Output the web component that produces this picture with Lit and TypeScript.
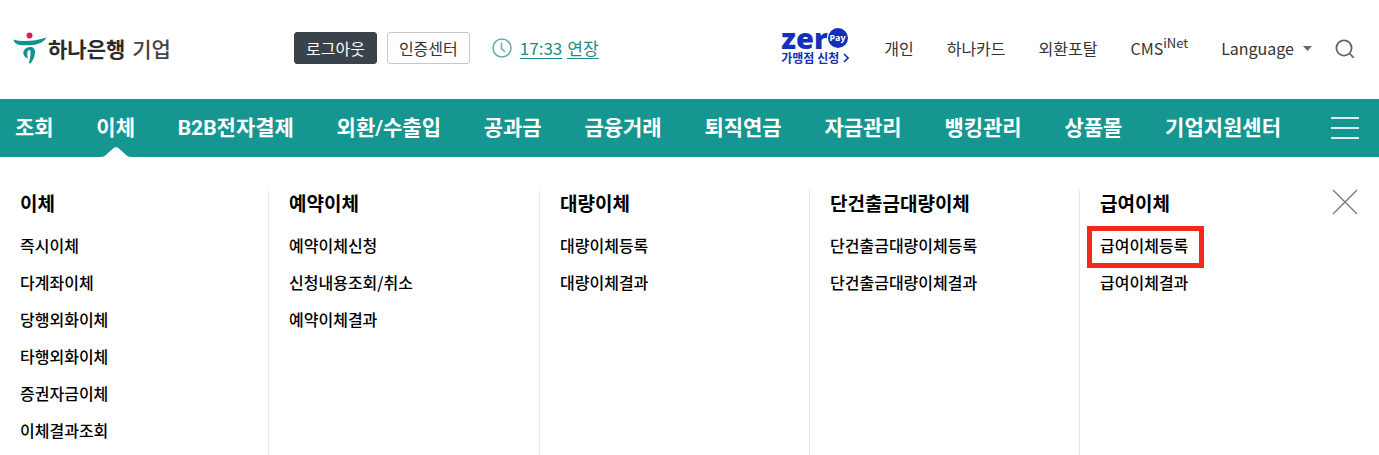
import { LitElement, html, css } from "lit";
import { customElement, state } from "lit/decorators.js";
import { classMap } from "lit/directives/class-map.js";

const MENUS = ["조회", "이체", "B2B전자결제", "외환/수출입", "공과금", "금융거래", "퇴직연금", "자금관리", "뱅킹관리", "상품몰", "기업지원센터"];

const GROUPS = [
  { title: "이체", items: ["즉시이체", "다계좌이체", "당행외화이체", "타행외화이체", "증권자금이체", "이체결과조회"] },
  { title: "예약이체", items: ["예약이체신청", "신청내용조회/취소", "예약이체결과"] },
  { title: "대량이체", items: ["대량이체등록", "대량이체결과"] },
  { title: "단건출금대량이체", items: ["단건출금대량이체등록", "단건출금대량이체결과"] },
  { title: "급여이체", items: ["급여이체등록", "급여이체결과"] },
];

const base = css`
  * { box-sizing: border-box; }
  a { color: inherit; text-decoration: none; white-space: nowrap; }
  button { font: inherit; margin: 0; padding: 0; border: 0; background: none; color: inherit; cursor: pointer; white-space: nowrap; }
  svg { display: block; flex: none; }
`;

@customElement("bank-header")
export class BankHeader extends LitElement {
  static styles = [base, css`
    :host { display: block; }
    .bar { display: flex; align-items: center; height: 99px; padding: 0 24px 3px 13px; font-size: 16px; line-height: 24px; color: #333; }
    .logo { display: flex; align-items: center; width: 281px; color: #2b2b2b; font-size: 21px; line-height: 30px; }
    .logo b { font-weight: 700; margin-left: 1px; }
    .logo span { font-weight: 500; margin-left: 7px; color: #444; }
    .session { display: flex; align-items: center; }
    .btn { height: 32px; padding: 0 11px; border: 1px solid #c8c8c8; border-radius: 3px; background: #fff; line-height: 28px; }
    .dark { background: #3a424a; border-color: #3a424a; color: #fff; margin-right: 10px; }
    .clock { margin: 0 8px 0 22px; }
    .timer { display: flex; gap: 5px; color: #1d8a85; font-size: 17px; text-decoration: underline; text-underline-offset: 3px; }
    .timer button { text-decoration: underline; text-underline-offset: 3px; }
    .links { display: flex; align-items: center; margin-left: auto; }
    .zero { display: flex; flex-direction: column; color: #142fb8; margin-right: 35px; }
    .brand { display: flex; align-items: center; height: 20px; font: 900 29px/20px "Noto Sans", sans-serif; }
    .pay { display: flex; align-items: center; justify-content: center; width: 20px; height: 20px; border-radius: 50%; background: #142fb8; color: #fff; font: 700 9px/18px "Noto Sans", sans-serif; }
    .apply { display: flex; align-items: center; gap: 4px; font-size: 12px; line-height: 20px; font-weight: 700; }
    .link { margin-right: 33px; }
    .cms { display: flex; }
    .cms small { font-size: 13px; line-height: 14px; }
    .lang { display: flex; align-items: center; gap: 9px; margin-right: 23px; }
  `];

  render() {
    return html`
      <header class="bar">
        <a class="logo" href="#">
          <svg width="34" height="34" viewBox="0 0 34 34" aria-hidden="true">
            <circle cx="16.5" cy="4.5" r="3" fill="#e0195c" />
            <path d="M0.5 8.5C9 11 21 10.500 33.5 6.5C31 11.500 24 14 16 14.300C8 14.500 1.500 14.500 0.500 8.500Z" fill="#10938c" />
            <path d="M10.300 21.500C11 15 22 13.500 22 20.500C22 26 19.500 30.500 17.300 32.500L15.800 32C17 28.500 17.800 24 17.500 20.500C17.200 18 14.500 19 14.300 21.500C14.100 23.500 14.300 25.500 15 27.500C11.800 26.500 10.200 24 10.300 21.500Z" fill="#10938c" />
          </svg>
          <b>하나은행</b><span>기업</span>
        </a>
        <div class="session">
          <button class="btn dark">로그아웃</button>
          <button class="btn">인증센터</button>
          <svg class="clock" width="20" height="20" viewBox="0 0 20 20" fill="none" stroke="#6bafa9" stroke-width="1.600" aria-hidden="true">
            <circle cx="10" cy="10" r="9" /><path d="M9.500 4.500V10.500L13 14" />
          </svg>
          <div class="timer"><span>17:33</span><button>연장</button></div>
        </div>
        <nav class="links" aria-label="바로가기">
          <a class="zero" href="#">
            <span class="brand">zer<span class="pay">Pay</span></span>
            <span class="apply">가맹점 신청
              <svg width="6" height="10" viewBox="0 0 6 10" fill="none" stroke="#142fb8" stroke-width="1.600" aria-hidden="true"><path d="M1 1L5 5L1 9" /></svg>
            </span>
          </a>
          <a class="link" href="#">개인</a>
          <a class="link" href="#">하나카드</a>
          <a class="link" href="#">외환포탈</a>
          <a class="link cms" href="#">CMS<small>iNet</small></a>
          <button class="lang">Language
            <svg width="9" height="5" viewBox="0 0 9 5" fill="#666" aria-hidden="true"><path d="M0 0H9L4.500 5Z" /></svg>
          </button>
          <button aria-label="검색">
            <svg width="20" height="20" viewBox="0 0 20 20" fill="none" stroke="#666" stroke-width="1.800" aria-hidden="true">
              <circle cx="9" cy="10" r="7.600" /><path d="M14.400 15.400L18.800 19.800" />
            </svg>
          </button>
        </nav>
      </header>
    `;
  }
}

@customElement("app-root")
export class AppRoot extends LitElement {
  static styles = [base, css`
    :host { display: block; background: #fff; font-family: "Noto Sans CJK KR", sans-serif; color: #000; overflow: hidden; }
    .gnb { display: flex; align-items: center; justify-content: space-between; height: 58px; padding: 0 20px 0 15px; background: #159690; color: #fff; }
    .menus { display: flex; flex: 1; justify-content: space-between; margin: 0 50px 0 0; padding: 0; list-style: none; font-family: Roboto, "Noto Sans CJK KR", sans-serif; font-size: 21px; font-weight: 700; line-height: 58px; }
    .menu { position: relative; }
    .caret { position: absolute; bottom: 0; left: 50%; margin-left: -16px; }
    .panel { position: relative; padding: 33px 0 0; }
    .groups { display: grid; grid-template-columns: 268fr 271fr 270fr 270fr 300fr; }
    .group { padding: 0 0 6px 20px; }
    .group + .group { border-left: 1px solid #e8e8e8; }
    .title { margin: 0 0 11px; font-size: 19px; line-height: 26px; font-weight: 700; }
    .items { margin: 0; padding: 0; list-style: none; font-size: 16px; line-height: 37px; font-weight: 500; }
    .item { display: block; width: fit-content; position: relative; }
    .marked::after { content: ""; position: absolute; inset: -1px -16px -4px -13px; border: 5px solid #f5281c; }
    .close { position: absolute; top: 32px; right: 21px; }
  `];

  @state() private active = "이체";
  @state() private marked = "급여이체등록";

  render() {
    return html`
      <bank-header></bank-header>
      <nav class="gnb" aria-label="주 메뉴">
        <ul class="menus">
          ${MENUS.map((name) => html`
            <li class="menu">
              <a href="#">${name}</a>
              ${name === this.active ? html`
                <svg class="caret" width="32" height="10" viewBox="0 0 32 10" fill="#fff" aria-hidden="true">
                  <path d="M0 10C4 10 5.500 8.500 7.500 6.500L13 1.500C15 -0.300 17 -0.300 19 1.500L24.500 6.500C26.500 8.500 28 10 32 10Z" />
                </svg>` : ""}
            </li>`)}
        </ul>
        <button aria-label="전체메뉴">
          <svg width="28" height="24" viewBox="0 0 28 24" stroke="#d9f0ee" stroke-width="2" aria-hidden="true">
            <path d="M0 2H28M0 12H28M0 22H28" />
          </svg>
        </button>
      </nav>
      <section class="panel">
        <div class="groups">
          ${GROUPS.map((g) => html`
            <div class="group">
              <h2 class="title">${g.title}</h2>
              <ul class="items">
                ${g.items.map((t) => html`<li><a href="#" class=${classMap({ item: true, marked: t === this.marked })}>${t}</a></li>`)}
              </ul>
            </div>`)}
        </div>
        <button class="close" aria-label="닫기">
          <svg width="26" height="26" viewBox="0 0 26 26" stroke="#777" stroke-width="1.300" aria-hidden="true"><path d="M1 1L25 25M25 1L1 25" /></svg>
        </button>
      </section>
    `;
  }
}
